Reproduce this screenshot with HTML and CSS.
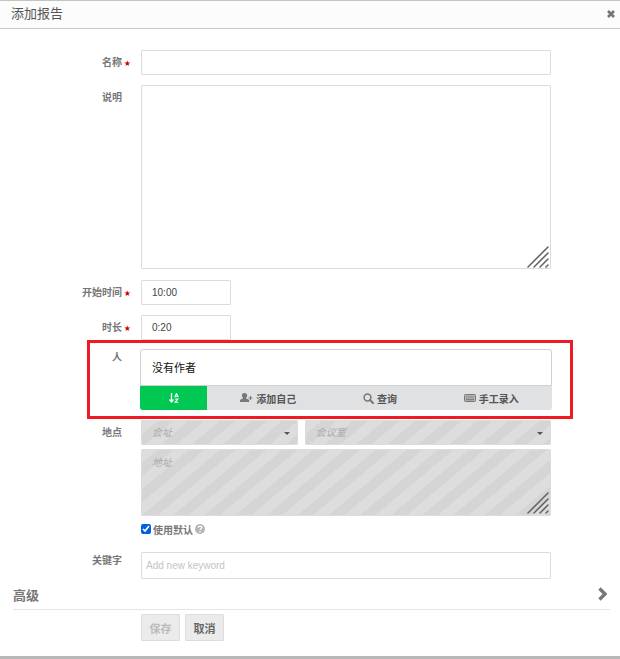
FILE: index.html
```html
<!DOCTYPE html>
<html lang="zh-CN">
<head>
    <meta charset="UTF-8">
    <meta name="viewport" content="width=device-width, initial-scale=1.0">
    <title>添加报告</title>
    <link rel="stylesheet" href="styles.css">
</head>
<body>

    <div class="dialog">
        <div class="dialog-header">
            <h1 class="dialog-title">添加报告</h1>
            <button class="close-button" type="button" aria-label="关闭">
                <svg width="8" height="8" viewBox="0 0 8 8"><path d="M1 1l6 6M7 1L1 7" stroke="#757575" stroke-width="2.6"/></svg>
            </button>
        </div>

        <form class="form">
            <div class="form-row">
                <label class="form-label required" for="title">名称</label>
                <input type="text" class="field" id="title">
            </div>

            <div class="form-row">
                <label class="form-label" for="description">说明</label>
                <div class="textarea-wrap">
                    <textarea class="field description" id="description"></textarea>
                    <svg class="grip" width="22" height="22" viewBox="0 0 22 22"><path d="M1 21L21 1M7 21L21 7M13 21l8-8M19 21l2-2"/></svg>
                </div>
            </div>

            <div class="form-row">
                <label class="form-label required" for="startTime">开始时间</label>
                <input type="text" class="field short" id="startTime" value="10:00">
            </div>

            <div class="form-row">
                <label class="form-label required" for="duration">时长</label>
                <input type="text" class="field short" id="duration" value="0:20">
            </div>

            <div class="form-row highlighted">
                <span class="form-label people-label">人</span>
                <div class="people">
                    <div class="people-list">没有作者</div>
                    <div class="people-toolbar">
                        <button class="sort-button" type="button" aria-label="排序">
                            <svg width="10" height="10" viewBox="0 0 10 10" fill="none" stroke="#fff"><path d="M2.5 0v9M.5 6.5l2 2.5 2-2.5" stroke-width="1.3"/><path d="M5.7 4.2L7.5.5l1.8 3.7M6.3 3.2h2.4M5.9 6h3L6 9.3h3.3" stroke-width="1.1"/></svg>
                        </button>
                        <button class="tool-button" type="button">
                            <svg width="13" height="10" viewBox="0 0 13 10" fill="#777"><path d="M4.5 0C6.200 0 7.200 1 7.200 2.600c0 1-.4 1.800-1.100 2.300v.6l2 .7c.8.3 1.100.9 1.100 1.700V9H0V7.900c0-.8.3-1.400 1-1.700l2-.7v-.6c-.7-.5-1.100-1.300-1.100-2.300C1.900 1 2.900 0 4.500 0z"/><path d="M10 3h1v1.500h1.500v1H11V7h-1V5.500H8.500v-1H10z"/></svg>
                            添加自己
                        </button>
                        <button class="tool-button" type="button">
                            <svg width="11" height="11" viewBox="0 0 11 11" fill="none" stroke="#777"><circle cx="4.500" cy="4.500" r="3.400" stroke-width="1.500"/><path d="M7 7l3 3" stroke-width="2" stroke-linecap="round"/></svg>
                            查询
                        </button>
                        <button class="tool-button" type="button">
                            <svg width="12" height="8" viewBox="0 0 12 8"><rect x=".5" y=".5" width="11" height="7" rx="1" fill="#b5b5b5" stroke="#777"/><path d="M2 2.500h8M2 4h8" stroke="#777" stroke-width=".8" stroke-dasharray="1 .6"/><path d="M2 5.700h8" stroke="#777"/></svg>
                            手工录入
                        </button>
                    </div>
                </div>
            </div>

            <div class="form-row">
                <label class="form-label" for="venue">地点</label>
                <div class="location">
                    <div class="location-selects">
                        <div class="select-wrap">
                            <select class="field disabled" id="venue" disabled>
                                <option>会址</option>
                            </select>
                        </div>
                        <div class="select-wrap">
                            <select class="field disabled" aria-label="会议室" disabled>
                                <option>会议室</option>
                            </select>
                        </div>
                    </div>
                    <div class="textarea-wrap">
                        <textarea class="field address disabled" aria-label="地址" placeholder="地址" disabled></textarea>
                        <svg class="grip" width="22" height="22" viewBox="0 0 22 22"><path d="M1 21L21 1M7 21L21 7M13 21l8-8M19 21l2-2"/></svg>
                    </div>
                    <div class="default-row">
                        <input type="checkbox" id="useDefault" checked>
                        <label for="useDefault">使用默认</label>
                        <svg width="10" height="10" viewBox="0 0 10 10"><circle cx="5" cy="5" r="5" fill="#b5b5b5"/><path d="M3.300 3.800c0-2.400 3.500-2.200 3.500-.2C6.800 4.800 5 4.700 5 6.100" fill="none" stroke="#fff" stroke-width="1.300"/><rect x="4.300" y="7" width="1.400" height="1.300" fill="#fff"/></svg>
                    </div>
                </div>
            </div>

            <div class="form-row keyword-row">
                <label class="form-label" for="keywords">关键字</label>
                <input type="text" class="field keywords" id="keywords" placeholder="Add new keyword">
            </div>
        </form>

        <button class="advanced" type="button">
            高级
            <svg width="10" height="14" viewBox="0 0 10 14"><path d="M1.500 1.500L7 7l-5.500 5.500" fill="none" stroke="#777" stroke-width="3.400"/></svg>
        </button>

        <div class="actions">
            <button class="action-button" type="button" disabled>保存</button>
            <button class="action-button" type="button">取消</button>
        </div>
    </div>

</body>
</html>
```

FILE: styles.css
```css
* {
    box-sizing: border-box;
}

body {
    margin: 0;
    background-color: #b8b8b8;
    color: #666;
    font-family: "Liberation Sans", "Noto Sans CJK SC", sans-serif;
    font-size: 10px;
}

button,
input,
select,
textarea {
    font-family: inherit;
    font-size: inherit;
    color: inherit;
}

button {
    margin: 0;
    padding: 0;
    border: none;
    background: none;
    cursor: pointer;
}

.dialog {
    background-color: #fff;
    border-top: 1px solid #c4c4c4;
    padding-bottom: 15px;
}

.dialog-header {
    display: flex;
    align-items: center;
    justify-content: space-between;
    height: 28px;
    padding: 0 5px 2px 11px;
    background-color: #fcfcfc;
    border-bottom: 1px solid #c8c8c8;
}

.dialog-title {
    margin: 0;
    font-size: 13px;
    font-weight: normal;
    line-height: 20px;
    color: #555;
}

.close-button {
    display: flex;
}

.form {
    display: flex;
    flex-direction: column;
    gap: 10px;
    padding: 21px 69px 0 0;
}

.form-row {
    display: grid;
    grid-template-columns: 131px 1fr;
    column-gap: 10px;
    align-items: start;
}

.form-label {
    padding: 1px 9px 0 0;
    line-height: 24px;
    font-weight: bold;
    text-align: right;
    color: #777;
}

.form-label.required {
    padding-right: 0;
}

.form-label.required::after {
    content: "★";
    display: inline-block;
    width: 9px;
    font-family: "DejaVu Sans", sans-serif;
    font-size: 8px;
    font-weight: normal;
    line-height: 10px;
    text-align: right;
    color: #c00;
}

.field {
    display: block;
    width: 100%;
    height: 25px;
    margin: 0;
    padding: 0 10px;
    border: 1px solid #dcdcdc;
    border-radius: 1px;
    background-color: #fff;
    color: #444;
    outline: none;
}

.field.short {
    width: 90px;
}

.textarea-wrap {
    position: relative;
}

textarea.field {
    padding: 5px 10px;
    line-height: 16px;
    resize: none;
}

.field.description {
    height: 184px;
    margin-bottom: 1px;
}

.field.address {
    height: 67px;
}

.grip {
    position: absolute;
    right: 2px;
    bottom: 2px;
    fill: none;
    stroke: #666;
    stroke-width: 1.6;
    stroke-linecap: round;
    pointer-events: none;
}

/* People */
.highlighted {
    position: relative;
}

.highlighted::after {
    content: "";
    position: absolute;
    inset: -10px -22px -9px 87px;
    border: 3px solid #ed1c24;
    pointer-events: none;
}

.people-label {
    line-height: 14px;
}

.people {
    margin: -1px -1px 0;
}

.people-list {
    height: 37px;
    padding: 0 11px;
    border: 1px solid #d0d0d0;
    border-radius: 3px 3px 0 0;
    font-size: 11px;
    line-height: 36px;
    color: #111;
}

.people-toolbar {
    display: flex;
    height: 24px;
    border-radius: 0 0 3px 3px;
    background-color: #e0e1e3;
    overflow: hidden;
}

.sort-button {
    display: flex;
    align-items: center;
    justify-content: center;
    width: 67px;
    background-color: #00c853;
}

.tool-button {
    display: flex;
    flex: 1 1 auto;
    align-items: center;
    justify-content: center;
    gap: 3px;
    font-weight: bold;
    color: #555;
}

/* Location */
.location {
    display: flex;
    flex-direction: column;
    gap: 4px;
}

.location-selects {
    display: grid;
    grid-template-columns: 7fr 11fr;
    gap: 7px;
}

.select-wrap {
    position: relative;
}

.select-wrap::after {
    content: "";
    position: absolute;
    top: 12px;
    right: 8px;
    border: 3px solid transparent;
    border-top-color: #555;
    border-bottom: none;
}

select.field {
    appearance: none;
}

.field.disabled {
    background: repeating-linear-gradient(140deg, #ddd, #ddd 10px, #d5d5d5 10px, #d5d5d5 20px);
    color: #aaa;
    font-style: italic;
    opacity: 1;
}

.field::placeholder {
    color: #aaa;
}

.default-row {
    display: flex;
    align-items: center;
    gap: 2px;
    height: 18px;
    font-weight: bold;
    color: #777;
}

.default-row input {
    width: 10px;
    height: 10px;
    margin: 0;
    accent-color: #0062e0;
}

.keyword-row {
    margin-top: 4px;
}

.keyword-row .form-label {
    line-height: 16px;
}

.field.keywords {
    height: 27px;
    padding: 0 4px;
}

.field.keywords::placeholder {
    color: #c4c4c4;
}

.advanced {
    display: flex;
    align-items: center;
    justify-content: space-between;
    width: calc(100% - 23px);
    height: 27px;
    margin: 4px 10px 4px 13px;
    padding: 0 2px 4px 0;
    border-bottom: 1px solid #e5e5e5;
    font-size: 13px;
    font-weight: bold;
    color: #777;
}

.actions {
    display: flex;
    gap: 5px;
    padding-left: 141px;
}

.action-button {
    width: 39px;
    height: 27px;
    border: 1px solid #ddd;
    border-radius: 1px;
    background-color: #ebebeb;
    font-size: 11px;
    font-weight: bold;
    color: #666;
}

.action-button:disabled {
    color: #bbb;
}
```
